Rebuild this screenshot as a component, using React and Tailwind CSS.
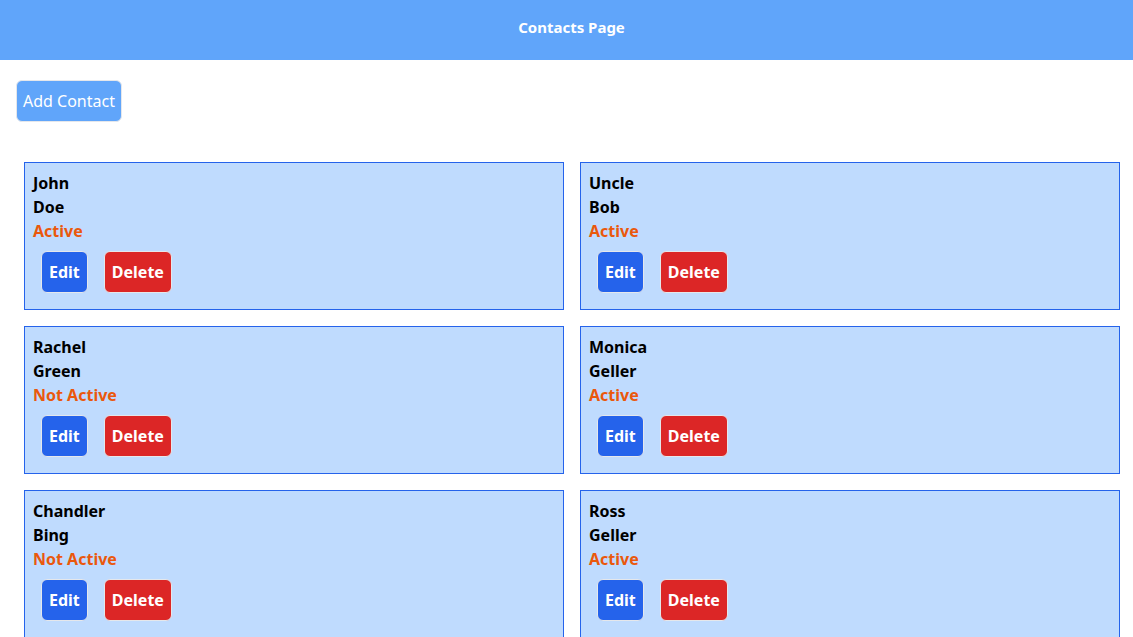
import React from 'react';

const contacts = [
  { first: 'John', last: 'Doe', active: true },
  { first: 'Uncle', last: 'Bob', active: true },
  { first: 'Rachel', last: 'Green', active: false },
  { first: 'Monica', last: 'Geller', active: true },
  { first: 'Chandler', last: 'Bing', active: false },
  { first: 'Ross', last: 'Geller', active: true },
];

function ContactCard({ contact }) {
  return (
    <div className="border border-[#2563eb] bg-[#bfdbfe] p-2 text-base leading-6">
      <div className="font-bold text-black">{contact.first}</div>
      <div className="font-bold text-black">{contact.last}</div>
      <div className="font-bold text-[#ea580c]">{contact.active ? 'Active' : 'Not Active'}</div>
      <div className="flex">
        <button className="m-2 h-[42px] rounded-md border border-[#e5e7eb] bg-[#2563eb] px-[7px] font-bold text-white">
          Edit
        </button>
        <button className="m-2 h-[42px] rounded-md border border-[#e5e7eb] bg-[#dc2626] px-[7px] font-bold text-white">
          Delete
        </button>
      </div>
    </div>
  );
}

export default function App() {
  return (
    <div className="min-h-screen bg-white" style={{ fontFamily: '"Noto Sans", "Open Sans", sans-serif' }}>
      <header className="flex h-[60px] items-center justify-center bg-[#60a5fa] pb-[6px] pl-[10px]">
        <h1 className="text-[15px] font-bold text-white">Contacts Page</h1>
      </header>

      <div className="ml-4 mt-5">
        <button className="h-[42px] rounded-md border border-[#e5e7eb] bg-[#60a5fa] px-[6px] text-base text-white">
          Add Contact
        </button>
      </div>

      <div className="mt-10 grid grid-cols-2 gap-4 pl-6 pr-[13px]">
        {contacts.map((c) => (
          <ContactCard key={c.first + c.last} contact={c} />
        ))}
      </div>
    </div>
  );
}
